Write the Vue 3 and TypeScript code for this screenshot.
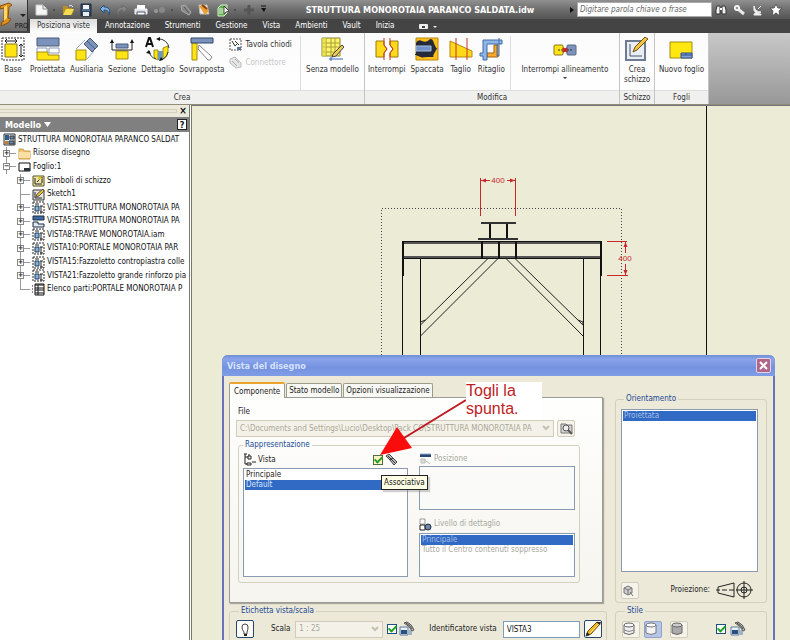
<script setup lang="ts">
import { ref } from 'vue'

interface TreeRow {
  label: string
  level: number
  icon: 'root' | 'folder' | 'sheet' | 'symbols' | 'sketch' | 'view' | 'projected' | 'parts'
  toggle?: '+' | '-'
}

const tabs = ['Posiziona viste', 'Annotazione', 'Strumenti', 'Gestione', 'Vista', 'Ambienti', 'Vault', 'Inizia']
const activeTab = ref(tabs[0])

const tree: TreeRow[] = [
  { label: 'STRUTTURA MONOROTAIA PARANCO SALDAT', level: 0, icon: 'root' },
  { label: 'Risorse disegno', level: 1, icon: 'folder', toggle: '+' },
  { label: 'Foglio:1', level: 1, icon: 'sheet', toggle: '-' },
  { label: 'Simboli di schizzo', level: 2, icon: 'symbols', toggle: '+' },
  { label: 'Sketch1', level: 2, icon: 'sketch' },
  { label: 'VISTA1:STRUTTURA MONOROTAIA PA', level: 2, icon: 'view', toggle: '+' },
  { label: 'VISTA5:STRUTTURA MONOROTAIA PA', level: 2, icon: 'projected', toggle: '+' },
  { label: 'VISTA8:TRAVE MONOROTAIA.iam', level: 2, icon: 'view', toggle: '+' },
  { label: 'VISTA10:PORTALE MONOROTAIA PAR', level: 2, icon: 'view', toggle: '+' },
  { label: 'VISTA15:Fazzoletto contropiastra colle', level: 2, icon: 'view', toggle: '+' },
  { label: 'VISTA21:Fazzoletto grande rinforzo pia', level: 2, icon: 'view', toggle: '+' },
  { label: 'Elenco parti:PORTALE MONOROTAIA P', level: 2, icon: 'parts' },
]

const dialogTabs = ['Componente', 'Stato modello', 'Opzioni visualizzazione']
const activeDialogTab = ref(dialogTabs[0])
const views = ['Principale', 'Default']
const selectedView = ref('Default')
const associative = ref(true)
const scaleFromBase = ref(true)
const styleFromBase = ref(true)
const viewId = ref('VISTA3')
const query = ref('')
</script>

<template>
  <div class="app">
    <header class="top">
      <button class="app-button" aria-label="Menu applicazione">
        <svg width="28" height="31" viewBox="0 0 28 31">
          <path d="M0 6l9-3 3 2-3 2-1 11 3 1-3 4-7 3 1-4 2-1V8L0 9z" fill="#e08f1a" stroke="#8a5210" />
          <path d="M4 7l3-2v13l-3 3z" fill="#ffd768" />
          <path d="M20 14h6l-3 3z" fill="#222" />
        </svg>
        <span>PRO</span>
      </button>
      <div class="bars">
        <div class="titlebar">
          <div class="quick">
            <svg width="240" height="18" viewBox="30 0 240 18">
              <path d="M36 4h7l4 4v6H36z" fill="#f5f5f5" stroke="#ccc" /><path d="M43 4v4h4" fill="none" stroke="#888" />
              <circle cx="54" cy="9" r="1" fill="#444" />
              <path d="M63 13V5h4l1 2h4v2h2l-2 5z" fill="#b99020" /><path d="M63 14l3-6h8l-3 6z" fill="#f3dc52" /><path d="M69 5q2-2 4 1" fill="none" stroke="#e8e8e8" />
              <path d="M81 3h10v12H81z" fill="#34465e" stroke="#1f2c3e" /><path d="M83 4h6v4h-6z" fill="#f4f4f4" /><path d="M83 11h6v4h-6z" fill="#e8edf2" /><path d="M82 9h8" stroke="#6f9bcd" />
              <path d="M100 8l4-4v2c5 0 7 3 5 8 0-4-2-5-5-5v3z" fill="#7fb2e0" stroke="#28507c" />
              <path d="M127 8l-4-4v2c-5 0-7 3-5 8 0-4 2-5 5-5v3z" fill="#868686" stroke="#6b6b6b" />
              <path d="M137 4h8v4h-8z" fill="#fff" /><path d="M135 8h12v5h-12z" fill="#dde3ea" stroke="#f4f4f4" /><path d="M137 11h8v3h-8z" fill="#fff" stroke="#556" />
              <circle cx="156" cy="10" r="2" fill="#999" /><circle cx="162" cy="9" r="3" fill="#888" /><circle cx="172" cy="9" r="1" fill="#444" />
              <path d="M181 5l4-1 6 7-2 3-7-4z" fill="#888" stroke="#aaa" /><path d="M184 6l5 6" stroke="#555" />
              <path d="M199 4h8l2 9h-9z" fill="#f2f2f2" stroke="#bbb" /><path d="M199 5l6-1 4 6-4 4z" fill="#e9a136" /><path d="M202 4l5 4" stroke="#8d3d16" stroke-width="2" />
              <path d="M218 7l3-3h6v8l-3 3h-6z" fill="#5fae48" stroke="#dff0d8" /><path d="M219 8h5M219 10h5M219 12h5" stroke="#e8f6e0" /><path d="M224 5l5 5-3 1-2 2z" fill="#fff" stroke="#444" />
              <circle cx="235" cy="9" r="1" fill="#444" /><path d="M249 4v10M244 9h10" stroke="#555" stroke-width="3" />
              <path d="M261 7h5l-2 4z" fill="#111" /><path d="M261 5h5" stroke="#111" />
            </svg>
          </div>
          <h1>STRUTTURA MONOROTAIA PARANCO SALDATA.idw</h1>
          <svg width="5" height="8" viewBox="0 0 5 8"><path d="M0 1l4 3-4 3z" fill="#111" /></svg>
          <input v-model="query" class="search" type="search" aria-label="Ricerca" placeholder="Digitare parola chiave o frase" />
          <svg width="78" height="18" viewBox="712 0 78 18">
            <path d="M717 5h3v8h-4V9zM722 5h3l1 4v4h-4z" fill="#f2f2f2" stroke="#333" /><path d="M720 8h2" stroke="#fff" stroke-width="2" />
            <path d="M738 8l6 5" stroke="#e8e8e8" stroke-width="3" /><circle cx="737" cy="7" r="2" fill="none" stroke="#f5f5f5" stroke-width="2" />
            <path d="M754 5q1 6 7 6l-2 1v1h2v1h-7v-1l2-1q-3-2-2-7zM758 8l3-3" fill="#eee" stroke="#eee" />
            <path d="M776 3l2 4h4l-3 3 1 5-4-3-4 3 1-5-3-3h4z" fill="#fff" stroke="#555" />
          </svg>
        </div>
        <nav class="tabs">
          <button v-for="t in tabs" :key="t" :class="{ active: t === activeTab }" @click="activeTab = t">{{ t }}</button>
          <svg width="20" height="8" viewBox="0 0 20 8"><rect x="1" y="2" width="9" height="5" rx="1" fill="#eee" /><path d="M4 5h3" stroke="#444" stroke-width="2" /><path d="M15 4h4l-2 2z" fill="#eee" /></svg>
        </nav>
      </div>
    </header>

    <section class="ribbon">
      <div class="panel crea">
        <div class="tools">
          <button class="tool">
            <svg width="24" height="24" viewBox="0 0 24 24"><rect x="1" y="1" width="22" height="22" fill="none" stroke="#333" stroke-dasharray="2 1" /><path d="M4 7h12v13H4z" fill="#ffe414" stroke="#8a7420" /><path d="M4 4h12M6 2L4 4l2 2M14 2l2 2-2 2M20 7v13M18 9l2-2 2 2M18 18l2 2 2-2" fill="none" stroke="#222" /></svg>
            Base
          </button>
          <button class="tool">
            <svg width="24" height="24" viewBox="0 0 24 24"><path d="M1 1h22v8H1z" fill="#7b93bb" stroke="#4b5a78" /><path d="M1 11h10v5H1z" fill="#fff" stroke="#8d9cb5" /><path d="M13 11h10v5H13z" fill="#fff" stroke="#8d9cb5" /><path d="M1 15h11v3h11v5H1z" fill="#ffe414" stroke="#a08b15" /></svg>
            Proiettata
          </button>
          <button class="tool">
            <svg width="24" height="24" viewBox="0 0 24 24"><path d="M1 13h10v10H1z" fill="#ffe414" stroke="#a08b15" /><path d="M1 12l9-9M12 22l7-8" stroke="#9aa8bf" fill="none" /><path d="M15 1l8 8-6 6-8-8z" fill="#7b93bb" stroke="#4b5a78" /><path d="M12 4l8 8" stroke="#4b5a78" /></svg>
            Ausiliaria
          </button>
          <button class="tool">
            <svg width="24" height="24" viewBox="0 0 24 24"><path d="M6 7h12v4H6z" fill="#7b93bb" stroke="#4b5a78" /><path d="M6 14h12v8H6z" fill="#ffe414" stroke="#a08b15" /><path d="M2 5v8h4M22 5v8h-4M6 13h12" fill="none" stroke="#222" /><path d="M0 6l2-4 2 4zM20 6l2-4 2 4z" fill="#111" /></svg>
            Sezione
          </button>
          <button class="tool">
            <svg width="26" height="24" viewBox="0 0 26 24"><path d="M9 13h4v10c-3-1-4-3-4-4zM18 11l5-2v6c-1 4-3 6-5 7z" fill="#ffe414" stroke="#a08b15" /><path d="M13 14h5v9h-5z" fill="#6d9ab5" /><path d="M13 2a10 10 0 0 1 11 9M23 15a10 10 0 0 1-8 8M11 22a10 10 0 0 1-7-8" fill="none" stroke="#333" /><path d="M1 10L4 1h1l3 9M2 7h5" fill="none" stroke="#111" stroke-width="2" /><path d="M1 16l3-3 2 4zM11 2l4-2v4zM14 24l2-4 2 3z" fill="#111" /></svg>
            Dettaglio
          </button>
          <button class="tool">
            <svg width="24" height="24" viewBox="0 0 24 24"><path d="M9 8l13 12-2 3h-2L8 12z" fill="#fff" stroke="#888" /><path d="M2 6h5v17H2z" fill="#ffe414" stroke="#a08b15" /><path d="M1 1h22v5H1z" fill="#7b93bb" stroke="#34466c" /></svg>
            Sovrapposta
          </button>
          <div class="small-tools">
            <button>
              <svg width="13" height="13" viewBox="0 0 13 13"><rect x="1" y="1" width="11" height="11" fill="none" stroke="#555" stroke-dasharray="2 1" /><path d="M3 3l3 5 2-2M6 3l4 4" stroke="#333" fill="none" /><path d="M8 9h4v3H8z" fill="#5b7697" /></svg>
              Tavola chiodi
            </button>
            <button disabled>
              <svg width="13" height="13" viewBox="0 0 13 13"><path d="M1 3l5-2 6 6v4l-5 1-6-5z" fill="#e5e5e5" stroke="#bbb" /><path d="M3 5l5 5M6 3l4 4" stroke="#aaa" /></svg>
              Connettore
            </button>
          </div>
          <div class="sub model">
            <button class="tool">
              <svg width="24" height="24" viewBox="0 0 24 24"><path d="M2 1h18v18H2z" fill="#fff36b" stroke="#8a8430" /><path d="M2 6h18M2 10h18M2 15h18M6 1v18M11 1v18M15 1v18" stroke="#a6a032" /><path d="M2 1h4v18H2z" fill="#e2dc4a" opacity=".6" /><path d="M13 17l9-9 2 2-8 9-4 1z" fill="#f1cb5a" stroke="#444" /><path d="M9 22h14M11 20v4" stroke="#3864b8" /></svg>
              Senza modello
            </button>
          </div>
        </div>
        <footer>Crea</footer>
      </div>
      <div class="panel modifica">
        <div class="tools">
          <button class="tool">
            <svg width="24" height="24" viewBox="0 0 24 24"><path d="M1 4h8v4l3 4-3 4v4H1zM15 4h8v16h-8v-4l3-4-3-4z" fill="#ffd91a" stroke="#9a7a12" /><path d="M9 1v7l3 4-3 4v7M15 1v7l3 4-3 4v7" fill="none" stroke="#c8342a" /></svg>
            Interrompi
          </button>
          <button class="tool">
            <svg width="24" height="24" viewBox="0 0 24 24"><path d="M1 1h22v22H1z" fill="#ffbe18" stroke="#b8860f" /><path d="M1 6q2-4 6-2t7-1 5 3 3 5-2 4-1 5-6 0-5 1-5-2-2-2z" fill="#252a38" /><path d="M1 9h15v5H1z" fill="#6f90c9" stroke="#a9bfe0" /></svg>
            Spaccata
          </button>
          <button class="tool">
            <svg width="24" height="24" viewBox="0 0 24 24"><path d="M1 4l22 10v6H1z" fill="#ffd91a" stroke="#b8860f" /><path d="M7 1v22M18 1v22" stroke="#c8342a" /></svg>
            Taglio
          </button>
          <button class="tool">
            <svg width="24" height="24" viewBox="0 0 24 24"><path d="M8 16h7V8h4v12H8z" fill="#ffa92a" stroke="#9a6412" /><path d="M4 3h19v4H8v16H4v-4H1v-3h3z" fill="#8fb6e6" stroke="#3f6ca8" /><path d="M20 1v18h-2V7" fill="none" stroke="#3f6ca8" /></svg>
            Ritaglio
          </button>
          <div class="sub">
            <button class="tool">
              <svg width="24" height="24" viewBox="0 0 24 24"><rect x="1" y="8" width="9" height="10" rx="1" fill="#ffe414" stroke="#8a7420" /><rect x="14" y="8" width="9" height="10" rx="1" fill="#7b93bb" stroke="#5a6884" /><path d="M5 13h14" stroke="#333" stroke-dasharray="2 1" /><path d="M10 11l4 4M14 11l-4 4" stroke="#c41e1e" stroke-width="2" /></svg>
              Interrompi allineamento
              <svg width="4" height="5" viewBox="0 0 4 5"><path d="M0 2h4L2 4z" fill="#333" /></svg>
            </button>
          </div>
        </div>
        <footer>Modifica</footer>
      </div>
      <div class="panel schizzo">
        <div class="tools">
          <button class="tool">
            <svg width="24" height="24" viewBox="0 0 24 24"><path d="M1 4h19v19H1z" fill="#e9eef5" stroke="#6f7b90" stroke-width="2" /><path d="M5 7v12h12" fill="none" stroke="#48536a" /><path d="M8 15l2-5L20 0l3 2-11 11z" fill="#f2c53c" stroke="#704d14" /></svg>
            Crea<br />schizzo
          </button>
        </div>
        <footer>Schizzo</footer>
      </div>
      <div class="panel fogli">
        <div class="tools">
          <button class="tool">
            <svg width="24" height="24" viewBox="0 0 24 24"><path d="M1 5h22v16H1z" fill="#ffe70f" stroke="#a08b15" /><path d="M12 16h11v5H12z" fill="#7da0d8" stroke="#2f4c86" /><path d="M12 18h11M17 16v2" stroke="#2f4c86" /></svg>
            Nuovo foglio
          </button>
        </div>
        <footer>Fogli</footer>
      </div>
    </section>

    <main class="work">
      <aside class="browser">
        <div class="grip"><i></i><button aria-label="Chiudi">×</button></div>
        <div class="browser-head">
          <button>Modello <svg width="7" height="5" viewBox="0 0 7 5"><path d="M0 0h7L3.500 5z" fill="#fff" /></svg></button>
          <button class="help" aria-label="Guida">?</button>
        </div>
        <ul class="tree">
          <li v-for="(row, i) in tree" :key="i" :class="['level' + row.level, { last: i === tree.length - 1 }]">
            <span v-if="row.level" class="branch"><b v-if="row.toggle">{{ row.toggle === '+' ? '+' : '−' }}</b></span>
            <svg v-if="row.icon === 'root'" width="13" height="13" viewBox="0 0 13 13"><path d="M1 1h11v11H1z" fill="#dfe5ea" stroke="#333" /><path d="M2 2h4v5H2z" fill="#2b5f86" /><path d="M7 3h4v3H7zM6 8h5v3H6z" fill="#6a91b3" stroke="#333" /><path d="M2 8h3v3H2z" fill="#c87a32" /></svg>
            <svg v-else-if="row.icon === 'folder'" width="13" height="13" viewBox="0 0 13 13"><path d="M1 2h4l1 2h6v8H1z" fill="#efc878" stroke="#c99a45" /><path d="M1 5h11v6H1z" fill="#f9dfa2" /></svg>
            <svg v-else-if="row.icon === 'sheet'" width="13" height="13" viewBox="0 0 13 13"><path d="M1 3h11v8H1z" fill="#fff" stroke="#111" /><path d="M6 8h6v3H6z" fill="#26333f" /></svg>
            <svg v-else-if="row.icon === 'symbols'" width="13" height="13" viewBox="0 0 13 13"><path d="M1 2h11v10H1z" fill="#eee7ac" stroke="#55501f" /><path d="M3 4v6h7M5 8l5-5v6" fill="none" stroke="#222" /><path d="M5 2l6 2-4 2z" fill="#e7c52c" /></svg>
            <svg v-else-if="row.icon === 'sketch'" width="13" height="13" viewBox="0 0 13 13"><path d="M1 2h11v10H1z" fill="#e6e6e2" stroke="#333" /><path d="M3 4v6h7" fill="none" stroke="#222" /><path d="M4 9l1-3 6-5 1 2-5 5z" fill="#e8c42c" stroke="#655" /></svg>
            <svg v-else-if="row.icon === 'projected'" width="13" height="13" viewBox="0 0 13 13"><path d="M1 1h11v4H1z" fill="#3c6ca0" stroke="#182c48" /><path d="M1 7h5v2h6v3H1z" fill="#dfe5ea" stroke="#182c48" /></svg>
            <svg v-else-if="row.icon === 'view'" width="13" height="13" viewBox="0 0 13 13"><rect x="1" y="1" width="11" height="11" fill="none" stroke="#222" stroke-dasharray="2 1" /><path d="M3 5h4v5H3z" fill="#8db0cf" stroke="#173c60" /><path d="M9 5v6M8 5h3M8 11h3M3 3h4" stroke="#222" /></svg>
            <svg v-else width="13" height="13" viewBox="0 0 13 13"><path d="M3 1h9v11H3z" fill="#fff" stroke="#111" /><path d="M3 2h9M3 5h9M3 7h9M3 10h9M6 2v10" stroke="#111" /><path d="M0 3h1M0 6h1M0 9h1" stroke="#111" /></svg>
            <span class="name">{{ row.label }}</span>
          </li>
        </ul>
      </aside>

      <div class="canvas">
        <svg class="drawing" width="598" height="535" viewBox="192 106 598 535">
          <g fill="none" stroke="#111" shape-rendering="crispEdges">
            <path d="M706.500 105v535" />
            <path d="M381.500 400V208.500H621.500V400" stroke="#444" stroke-dasharray="1 2" />
            <path d="M402 242h199M402 257.500h199" stroke="#555" stroke-width="3" />
            <path d="M402 241.500h199M402 258.500h199" />
            <path d="M402.500 241v35M600.500 241v35" stroke-width="2" />
            <path d="M402.500 275v100M420.500 259v100M583.500 259v100M600.500 275v100" />
            <path d="M481 222.500h35M478 239h40" stroke="#333" stroke-width="2" />
            <path d="M489.500 224v14M507 224v14M481.500 241v17M498.500 241v17M515.500 241v17" stroke-width="2" />
          </g>
          <path d="M488 258.500L420.500 325M498 258.500L420.500 336M506 258.500l77 77.500M515 258.500l68 66.500M420.500 325v-3l5-2M583 325v-3l-5-2" fill="none" stroke="#222" />
          <g stroke="#c8282c" fill="none">
            <path d="M480.500 178v38M515.500 178v38M481 180.500h9M507 180.500h8M607 241.500h20M607 275.500h21M625.500 241v12M625.500 264v11" />
            <path d="M486 178.500v4l-5-2zM510 178.500v4l5-2zM623.500 247h4l-2-5zM623.500 270h4l-2 5z" fill="#c8282c" stroke="none" />
          </g>
          <g fill="#c8282c" class="dimension">
            <text x="498" y="183">400</text>
            <text x="625" y="261">400</text>
          </g>
        </svg>

        <section class="dialog" role="dialog" aria-labelledby="dialog-title">
          <header class="dialog-title">
            <h2 id="dialog-title">Vista del disegno</h2>
            <button aria-label="Chiudi"><svg width="13" height="13" viewBox="0 0 13 13"><path d="M3 3l7 7M10 3l-7 7" stroke="#fff" stroke-width="2" /></svg></button>
          </header>
          <div class="dialog-body">
            <div class="component">
              <div class="dialog-tabs">
                <button v-for="t in dialogTabs" :key="t" :class="{ active: t === activeDialogTab }" @click="activeDialogTab = t">{{ t }}</button>
              </div>
              <div class="page">
                <label for="file">File</label>
                <div class="file-row">
                  <span class="combo">
                    <select id="file" disabled><option>C:\Documents and Settings\Lucio\Desktop\Pack CO\STRUTTURA MONOROTAIA PA</option></select>
                    <svg width="11" height="13" viewBox="0 0 11 13"><path d="M2 4l3 3 3-3" fill="none" stroke="#c4c1b0" stroke-width="2" /></svg>
                  </span>
                  <button class="icon-button faded" aria-label="Sfoglia"><svg width="13" height="13" viewBox="0 0 13 13"><path d="M1 2h5l1 1h5v8H1z" fill="#d5d5d0" stroke="#777" /><circle cx="6" cy="6" r="3" fill="#eee" stroke="#555" /><path d="M8 8l4 4" stroke="#555" stroke-width="2" /></svg></button>
                </div>
                <fieldset class="representation">
                  <legend>Rappresentazione</legend>
                  <div class="column">
                    <div class="list-head">
                      <svg width="13" height="13" viewBox="0 0 13 13"><path d="M2 1v10h2M2 4h3M1 1h3M5 3h3v3H5zM4 10h4v2H4zM9 9h4M5 2h2" fill="none" stroke="#222" /></svg>
                      <span>Vista</span>
                      <input v-model="associative" class="hot" type="checkbox" aria-label="Associativa" />
                      <svg class="link" width="13" height="13" viewBox="0 0 13 13"><path d="M1 3l3-2 4 4-3 2zM5 7l3-2 4 4-3 3z" fill="#bbb" stroke="#444" /><path d="M3 3l7 7" stroke="#333" /></svg>
                    </div>
                    <ul class="list views" role="listbox" aria-label="Vista">
                      <li v-for="v in views" :key="v" role="option" :aria-selected="v === selectedView" :class="{ selected: v === selectedView }" @click="selectedView = v">{{ v }}</li>
                    </ul>
                    <div class="tooltip" role="tooltip">Associativa</div>
                  </div>
                  <div class="column disabled">
                    <div class="list-head">
                      <svg width="13" height="13" viewBox="0 0 13 13"><path d="M1 2h11v3H1z" fill="#28456f" /><path d="M1 2h11" stroke="#8fa8cc" /><path d="M2 7h4v4H2zM6 8l5 4" fill="#ddd" stroke="#bbb" /></svg>
                      <span>Posizione</span>
                    </div>
                    <ul class="list position" role="listbox" aria-label="Posizione"></ul>
                    <div class="list-head detail-head">
                      <svg width="13" height="13" viewBox="0 0 13 13"><path d="M1 1h5v5H1z" fill="#fff" stroke="#999" /><path d="M1 7h5v5H1z" fill="#fff" stroke="#222" /><circle cx="9" cy="9" r="3" fill="#6f87a8" stroke="#1c2a40" /></svg>
                      <span>Livello di dettaglio</span>
                    </div>
                    <ul class="list detail" role="listbox" aria-label="Livello di dettaglio">
                      <li class="selected" role="option" aria-selected="true">Principale</li>
                      <li role="option" aria-selected="false">Tutto il Centro contenuti soppresso</li>
                    </ul>
                  </div>
                </fieldset>
              </div>
            </div>

            <fieldset class="orientation">
              <legend>Orientamento</legend>
              <ul class="list" role="listbox" aria-label="Orientamento"><li class="selected pale" role="option" aria-selected="true">Proiettata</li></ul>
              <div class="projection">
                <button class="icon-button faded" aria-label="Cambia orientamento vista"><svg width="13" height="13" viewBox="0 0 13 13"><path d="M2 4l4-2 4 2v5l-4 2-4-2z" fill="#ccc" stroke="#777" /><path d="M2 4l4 2 4-2M6 6v5M8 8l3 4" fill="none" stroke="#777" /></svg></button>
                <span>Proiezione:</span>
                <svg width="37" height="18" viewBox="0 0 37 18"><path d="M2 6l16-4v14L2 12zM0 9h4M6 9h5M13 9h5M20 9h17M28 0v18" fill="none" stroke="#222" /><circle cx="28" cy="9" r="7" fill="none" stroke="#222" /><circle cx="28" cy="9" r="3" fill="none" stroke="#222" /></svg>
              </div>
            </fieldset>

            <fieldset class="scale">
              <legend>Etichetta vista/scala</legend>
              <button class="icon-button dark" aria-label="Attiva etichetta"><svg width="13" height="13" viewBox="0 0 13 13"><path d="M5 11V9Q3 7 3 4q0-3 3-3t3 3q0 3-1 5v2z" fill="#fff" stroke="#444" /><path d="M5 12h3" stroke="#222" stroke-width="2" /></svg></button>
              <label class="scale-label" for="scale">Scala</label>
              <span class="combo scale-combo">
                <select id="scale" disabled><option>1 : 25</option></select>
                <svg width="11" height="13" viewBox="0 0 11 13"><path d="M2 4l3 3 3-3" fill="none" stroke="#c4c1b0" stroke-width="2" /></svg>
              </span>
              <input v-model="scaleFromBase" type="checkbox" aria-label="Scala da base" />
              <svg width="16" height="16" viewBox="0 0 16 16"><path d="M1 6h8v8H1z" fill="#e8eef5" stroke="#5f7d9b" /><path d="M2 9h6v4H2z" fill="#294e80" /><path d="M10 9h3v5h-3z" fill="#9eb2c8" /><path d="M5 2l3-1q5 2 7 8l-2 1q-2-5-8-8z" fill="#bbb" stroke="#555" /><path d="M7 2q4 2 6 6" fill="none" stroke="#444" /></svg>
              <label class="id-label" for="view-id">Identificatore vista</label>
              <input id="view-id" v-model="viewId" type="text" />
              <button class="icon-button dark" aria-label="Modifica etichetta"><svg width="16" height="16" viewBox="0 0 16 16"><path d="M1 15l2-5L12 1l3 2-9 10z" fill="#f2b71c" stroke="#6b4a12" /><path d="M5 12L14 3" stroke="#ffe98a" /><path d="M1 15l1-4 3 3z" fill="#222" /><path d="M11 1l4 3 1-3z" fill="#30281c" /></svg></button>
            </fieldset>

            <fieldset class="style">
              <legend>Stile</legend>
              <button class="icon-button faded" aria-label="Linea nascosta"><svg width="12" height="14" viewBox="0 0 12 14"><path d="M1 3v8q5 3 10 0V3" fill="#eee" stroke="#666" /><ellipse cx="6" cy="3" rx="5" ry="2" fill="#f8f8f8" stroke="#666" /><path d="M1 8q5 3 10 0" fill="none" stroke="#888" /></svg></button>
              <button class="icon-button pressed" aria-label="Linea nascosta rimossa"><svg width="12" height="14" viewBox="0 0 12 14"><path d="M1 3v8q5 3 10 0V3" fill="#f2f4f8" stroke="#777" /><ellipse cx="6" cy="3" rx="5" ry="2" fill="#fff" stroke="#777" /></svg></button>
              <button class="icon-button faded shaded" aria-label="Ombreggiata"><svg width="12" height="14" viewBox="0 0 12 14"><path d="M1 3v8q5 3 10 0V3" fill="#aaa" stroke="#666" /><ellipse cx="6" cy="3" rx="5" ry="2" fill="#ccc" stroke="#666" /></svg></button>
              <input v-model="styleFromBase" type="checkbox" aria-label="Stile da base" />
              <svg width="16" height="16" viewBox="0 0 16 16"><path d="M1 6h8v8H1z" fill="#e8eef5" stroke="#5f7d9b" /><path d="M2 9h6v4H2z" fill="#294e80" /><path d="M10 9h3v5h-3z" fill="#9eb2c8" /><path d="M5 2l3-1q5 2 7 8l-2 1q-2-5-8-8z" fill="#bbb" stroke="#555" /><path d="M7 2q4 2 6 6" fill="none" stroke="#444" /></svg>
            </fieldset>
          </div>

          <svg class="arrow" width="87" height="58" viewBox="0 0 87 58"><path d="M86 2L24 40" stroke="#c01820" stroke-width="2" /><path d="M0 57L17 29l15 21z" fill="#f80c0c" /></svg>
          <p class="note">Togli la spunta.</p>
        </section>
      </div>
    </main>
  </div>
</template>

<style>
body { overflow: hidden; }
</style>

<style scoped>
* { box-sizing: border-box; }
.app { display: flex; flex-direction: column; height: 100vh; overflow: hidden; font: 8px/10px "DejaVu Sans Condensed", "DejaVu Sans", sans-serif; color: #222; background: #ebebd6; }
button { padding: 0; border: 0; background: none; font: inherit; color: inherit; }
svg { display: block; flex: none; }
ul { margin: 0; padding: 0; list-style: none; }
h1, h2, p { margin: 0; }

.top { display: flex; height: 33px; flex: none; background: #444; }
.app-button { display: grid; width: 28px; height: 31px; border-right: 1px solid #333; background: linear-gradient(#c4c4c4, #8c8c8c 50%, #6c6c6c); }
.app-button > * { grid-area: 1 / 1; }
.app-button span { align-self: end; justify-self: end; font-size: 7px; line-height: 9px; color: #111; }
.bars { flex: 1; min-width: 0; }
.titlebar { display: flex; align-items: center; height: 19px; padding-left: 2px; background: linear-gradient(#909090, #6e6e6e 50%, #555); }
.quick { width: 240px; }
.titlebar h1 { flex: 1; text-align: center; font-size: 9px; line-height: 18px; white-space: nowrap; color: #fff; }
.search { width: 135px; height: 15px; margin-left: 2px; padding: 0 2px; border: 1px solid #aaa; background: #fff; font: italic 8px/13px "DejaVu Sans Condensed", sans-serif; }
.search::placeholder { color: #666; }
.tabs { display: flex; align-items: center; height: 14px; padding-left: 2px; background: #444; color: #fff; gap: 15px; }
.tabs button { height: 14px; white-space: nowrap; }
.tabs .active { margin-right: -7px; padding: 0 7px; background: linear-gradient(#dcdcdc, #fff); color: #333; }
.tabs svg { margin-left: 8px; }

.ribbon { display: flex; flex: none; height: 72px; border-bottom: 1px solid #8f8d78; background: linear-gradient(#c8c8c8, #989898); color: #333; }
.panel { display: flex; flex-direction: column; border-right: 1px solid #c4c4c4; background: linear-gradient(#fbfbfb, #fff); }
.panel footer { height: 14px; border-top: 1px solid #dedede; background: #f0f0ef; text-align: center; line-height: 13px; }
.crea { width: 365px; }
.modifica { width: 255px; }
.schizzo { width: 35px; }
.fogli { width: 54px; }
.tools { display: flex; flex: 1; gap: 5px; padding-left: 1px; }
.tool { display: flex; flex-direction: column; align-items: center; align-self: flex-start; min-width: 24px; padding-top: 4px; line-height: 10px; white-space: nowrap; }
.tool svg:first-child { margin-bottom: 4px; }
.small-tools { display: flex; flex-direction: column; gap: 5px; padding-top: 5px; }
.small-tools button { display: flex; align-items: center; gap: 3px; height: 13px; white-space: nowrap; }
.small-tools button:disabled { color: #c8c8c8; }
.sub { display: flex; flex: 1; justify-content: center; align-self: stretch; margin-top: 3px; border-left: 1px solid #ddd; }
.sub.model { flex: 0 0 64px; margin-left: auto; }
.sub .tool { padding-top: 1px; }
.modifica .tools { padding-left: 3px; }
.schizzo .tools, .fogli .tools { justify-content: center; padding: 0; }

.work { display: flex; flex: 1; min-height: 0; }
.browser { width: 192px; flex: none; overflow: hidden; border-right: 3px double #77776c; background: #fff; }
.grip { display: flex; align-items: center; height: 12px; padding: 0 2px 0 0; background: #ebe9da; gap: 2px; }
.grip i { flex: 1; height: 4px; border: 1px solid #d2cfbb; border-left: 0; }
.grip button { width: 8px; font-size: 10px; font-weight: bold; color: #111; }
.browser-head { display: flex; justify-content: space-between; align-items: center; height: 15px; padding: 0 2px 0 5px; background: #808080; color: #fff; }
.browser-head button { display: flex; align-items: center; gap: 3px; font-size: 9px; font-weight: bold; }
.browser-head .help { justify-content: center; width: 10px; height: 11px; border: 1px solid #222; background: #fff; color: #111; }
.tree { display: grid; grid-auto-rows: 1fr; height: 164px; padding-top: 1px; }
.tree li { display: flex; align-items: center; min-height: 0; white-space: nowrap; color: #111; }
.tree .level0 { padding-left: 3px; }
.tree .level1 { padding-left: 3px; }
.tree .level2 { padding-left: 17px; }
.tree .name { padding-left: 2px; }
.branch { display: flex; align-items: center; align-self: stretch; width: 15px; background: linear-gradient(#999, #999) 3px 0 / 1px 100% no-repeat, linear-gradient(#999, #999) 3px 50% / 10px 1px no-repeat; }
.last .branch { background: linear-gradient(#999, #999) 3px 0 / 1px 50% no-repeat, linear-gradient(#999, #999) 3px 50% / 10px 1px no-repeat; }
.branch b { width: 7px; height: 7px; border: 1px solid #888; background: #fff; line-height: 5px; text-align: center; font-size: 7px; }

.canvas { position: relative; flex: 1; min-width: 0; overflow: hidden; border-top: 1px solid #777; background: #ebebd6; }
.drawing { position: absolute; top: 0; left: 0; }
.dimension { font: 8px "Liberation Sans", sans-serif; text-anchor: middle; }

.dialog { position: absolute; top: 249px; left: 30px; right: 15px; border: solid #6a72ba; border-width: 0 2px; border-radius: 6px 6px 0 0; background: #ece9d8; }
.dialog-title { display: flex; align-items: center; justify-content: space-between; height: 21px; padding: 0 4px 0 5px; margin: 0 -2px; border-radius: 6px 6px 0 0; background: linear-gradient(#6f8fd6, #89a4ea 20%, #7592e0 60%, #7f9ce6); }
.dialog-title h2 { font-size: 9px; color: #d6e2fc; }
.dialog-title button { display: grid; place-items: center; width: 15px; height: 15px; border: 1px solid #e5d2e2; border-radius: 2px; background: #b0668a; }
.dialog-body { display: grid; grid-template-columns: 1fr 152px; column-gap: 8px; padding: 6px 6px 8px 5px; }
.component { padding-right: 4px; }
.dialog-tabs { display: flex; align-items: flex-end; height: 15px; gap: 1px; }
.dialog-tabs button { height: 14px; padding: 0 2px; border: 1px solid #9b9c8c; border-bottom: 0; border-radius: 2px 2px 0 0; background: #f8f8f4; line-height: 13px; white-space: nowrap; }
.dialog-tabs .active { height: 16px; margin-bottom: -1px; border-top: 2px solid #eba52f; background: #fdfdfb; padding: 0 4px; }
.page { display: flex; flex-direction: column; height: 206px; padding: 8px 22px 0 8px; border: 1px solid #9b9c9a; box-shadow: 1px 1px 1px #aaa89a; background: linear-gradient(#fefefd, #f5f4ee); }
.page > label { line-height: 11px; }
.file-row { display: flex; gap: 3px; margin: 3px 5px 3px -2px; }
.combo { display: grid; flex: 1; min-width: 0; }
.combo > * { grid-area: 1 / 1; }
.combo svg { align-self: center; justify-self: end; margin-right: 2px; }
select { appearance: none; width: 100%; height: 17px; padding: 0 14px 0 3px; border: 1px solid #d0cdbb; border-radius: 0; background: #f4f2e8; color: #aaa798; opacity: 1; font: inherit; }
.icon-button { display: grid; place-items: center; flex: none; width: 18px; height: 17px; border: 1px solid #d0cdbd; border-radius: 2px; background: #f5f3ea; }
.icon-button.dark { height: 18px; border-color: #24476f; background: #fbfaf5; }
.icon-button.pressed { border-color: #8fa3cc; background: #b7c6e6; }

fieldset { margin: 0; padding: 0; min-width: 0; border: 1px solid #d3d0bd; border-radius: 3px; }
legend { margin-left: 4px; padding: 0 2px; line-height: 10px; color: #234a94; }
.representation { display: grid; grid-template-columns: 165px 156px; justify-content: space-between; height: 143px; padding: 1px 4px 0; }
.representation legend { margin-left: 0; }
.column { position: relative; }
.list-head { display: flex; align-items: center; height: 17px; gap: 2px; }
.list-head span { flex: 1; }
.disabled, .disabled .selected { color: #a9a8a0; }
.disabled .list-head { height: 15px; }
.disabled .detail-head { height: 18px; margin-top: 5px; }
.list { border: 1px solid #8a9bb0; background: #fff; padding: 1px; }
.list li { height: 10px; padding-left: 1px; line-height: 10px; white-space: nowrap; overflow: hidden; }
.list .selected { background: #316ac5; color: #d9e6fb; }
.disabled .list .selected, .list .pale { color: #a4bce2; }
.views { height: 109px; }
.position { height: 44px; background: #fafaf8; }
.detail { height: 44px; }
.tooltip { position: absolute; top: 24px; left: 138px; z-index: 1; padding: 1px 2px; border: 1px solid #222; box-shadow: 2px 2px 1px #8886; background: #ffffe6; color: #111; line-height: 11px; }

input[type="checkbox"] { appearance: none; display: grid; place-items: center; flex: none; width: 10px; height: 10px; margin: 0; border: 1px solid #1c5180; background: #fff; }
input[type="checkbox"]:checked::after { content: ""; width: 3px; height: 6px; border: solid #21a121; border-width: 0 2px 2px 0; transform: translateY(-1px) rotate(45deg); }
input.hot { background: #fdf1c6; border-color: #4f6f40; }
.link { margin-right: 10px; }

.orientation { height: 209px; margin-top: 12px; padding: 5px 8px 0 5px; }
.orientation .list { height: 163px; }
.projection { display: flex; align-items: center; justify-content: space-between; padding-top: 9px; }
.projection span { flex: 1; text-align: right; padding-right: 6px; }
.projection svg:last-child { margin-right: 5px; }
.scale { display: flex; align-items: center; margin-top: 3px; padding: 4px 4px 4px 6px; }
.scale-label { padding: 0 5px 0 17px; }
.scale-combo { flex: 0 0 88px; margin-right: 4px; }
.scale-combo + input { margin-right: 2px; }
.id-label { padding: 0 6px 0 14px; white-space: nowrap; }
#view-id { flex: 1; min-width: 0; height: 17px; margin-right: 4px; padding: 0 3px; border: 1px solid #7f9db9; background: #fff; font: inherit; color: #111; }
.style { display: flex; align-items: center; margin-top: 3px; padding: 4px 6px; gap: 4px; }
.style legend, .scale legend, .orientation legend { margin-left: 3px; }
.style .shaded { margin: 0 24px 0 4px; }
.style input { margin-left: auto; }
.style svg:last-child { margin-right: 16px; }

.arrow { position: absolute; top: 43px; left: 156px; z-index: 2; }
.note { position: absolute; top: 27px; left: 242px; width: 76px; z-index: 2; height: 38px; background: #fff; font: 16px/18px "Liberation Sans", Arial, sans-serif; color: #c01c24; }
</style>
